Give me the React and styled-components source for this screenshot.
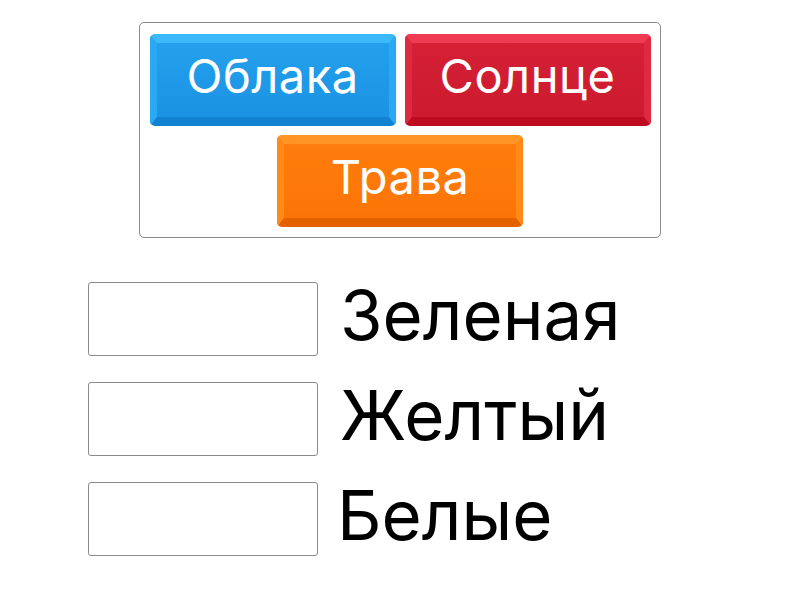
import React from "react";
import styled, { createGlobalStyle } from "styled-components";

const GlobalStyle = createGlobalStyle`
  body {
    margin: 0;
    background: #ffffff;
    font-family: Inter, "Noto Sans", sans-serif;
  }
`;

const Page = styled.div`
  width: 800px;
  height: 600px;
  display: flex;
  flex-direction: column;
  align-items: center;
`;

const Bank = styled.div`
  box-sizing: border-box;
  width: 522px;
  margin-top: 22px;
  padding: 11px 9px 10px;
  border: 1.5px solid #8a8a8a;
  border-radius: 5px;
  display: flex;
  flex-wrap: wrap;
  justify-content: center;
  gap: 9px;
`;

const palettes = {
  blue: { top: "#3cb9fa", side: "#2aa9f2", face: "#23a0ec", faceEnd: "#1b93e3", bottom: "#1181d2" },
  red: { top: "#ef3c52", side: "#dd2a40", face: "#d52036", faceEnd: "#cc1a2e", bottom: "#bd0c1f" },
  orange: { top: "#ff9524", side: "#ff8a17", face: "#ff7d0c", faceEnd: "#fb7506", bottom: "#e46100" },
};

const Tile = styled.div`
  box-sizing: border-box;
  width: 246px;
  height: 92px;
  border-radius: 5px;
  border-style: solid;
  border-width: 9px 7px 9px 7px;
  border-color: ${(p) => palettes[p.$tone].top} ${(p) => palettes[p.$tone].side}
    ${(p) => palettes[p.$tone].bottom} ${(p) => palettes[p.$tone].side};
  background: linear-gradient(
    ${(p) => palettes[p.$tone].face},
    ${(p) => palettes[p.$tone].faceEnd}
  );
  color: #ffffff;
  font-size: 47px;
  letter-spacing: 0.5px;
  display: flex;
  align-items: center;
  justify-content: center;
  padding-bottom: 10px;
`;

const Answers = styled.div`
  align-self: stretch;
  padding-left: 88px;
  margin-top: 44px;
  display: flex;
  flex-direction: column;
  gap: 26px;
`;

const Row = styled.div`
  display: flex;
  align-items: center;
  gap: 22px;
`;

const Slot = styled.div`
  box-sizing: border-box;
  width: 230px;
  height: 74px;
  border: 1.5px solid #8a8a8a;
  border-radius: 3px;
  background: #ffffff;
`;

const Word = styled.span`
  font-size: 69px;
  color: #000000;
  line-height: 1;
  position: relative;
  top: -4px;
  margin-left: ${(p) => p.$nudge || 0}px;
`;

const tiles = [
  { text: "Облака", tone: "blue" },
  { text: "Солнце", tone: "red" },
  { text: "Трава", tone: "orange" },
];

const words = [
  { text: "Зеленая", nudge: 0 },
  { text: "Желтый", nudge: 0 },
  { text: "Белые", nudge: -3 },
];

const App = () => {
  return (
    <Page>
      <GlobalStyle />
      <Bank>
        {tiles.map((t) => (
          <Tile key={t.text} $tone={t.tone}>
            {t.text}
          </Tile>
        ))}
      </Bank>
      <Answers>
        {words.map((w) => (
          <Row key={w.text}>
            <Slot />
            <Word $nudge={w.nudge}>{w.text}</Word>
          </Row>
        ))}
      </Answers>
    </Page>
  );
};

export default App;
